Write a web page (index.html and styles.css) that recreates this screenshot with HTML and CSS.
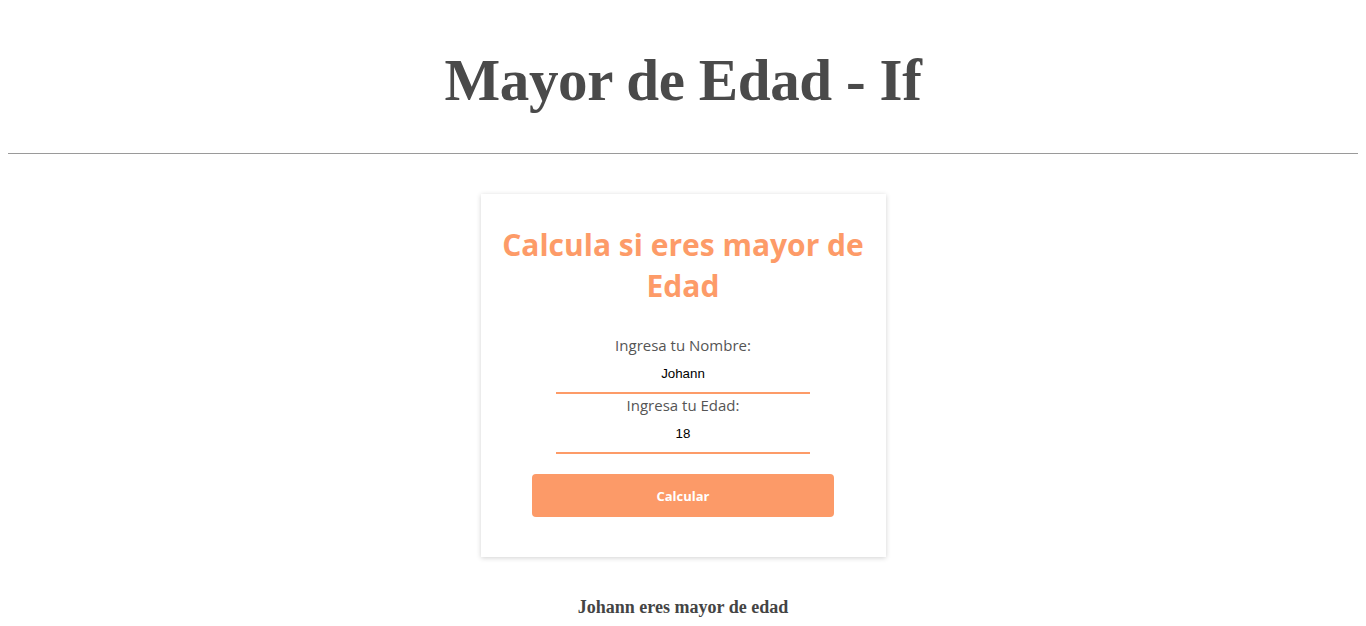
FILE: index.html
```html
<!DOCTYPE html>
<html lang="es">
<head>
<meta charset="utf-8">
<title>Mayor de Edad - If</title>
<link rel="stylesheet" href="styles.css">
</head>
<body>
<h1 class="title">Mayor de Edad - If</h1>
<hr class="divider">
<main class="wrap">
  <section class="card">
    <h2 class="card-title">Calcula si eres mayor de Edad</h2>
    <form class="form">
      <label class="label" for="nombre">Ingresa tu Nombre:</label>
      <input class="field" id="nombre" type="text" value="Johann">
      <label class="label" for="edad">Ingresa tu Edad:</label>
      <input class="field" id="edad" type="text" value="18">
      <button class="btn" type="button">Calcular</button>
    </form>
  </section>
  <p class="result">Johann eres mayor de edad</p>
</main>
</body>
</html>
```
FILE: styles.css
```css
html, body { background: #fff; }
body {
  margin: 8px;
  font-family: "Liberation Serif", "Times New Roman", serif;
}
.title {
  margin: 35px 0 0;
  text-align: center;
  font-size: 59px;
  line-height: 74px;
  letter-spacing: -0.4px;
  font-weight: bold;
  color: #4a4a4a;
}
.divider {
  margin: 36px 0 0;
  border: none;
  border-top: 1px solid #9a9a9a;
  height: 0;
}
.wrap {
  display: flex;
  flex-direction: column;
  align-items: center;
  padding-top: 40px;
}
.card {
  width: 405px;
  box-sizing: border-box;
  padding: 30px 15px 40px;
  background: #fff;
  box-shadow: 0 1px 5px rgba(0,0,0,0.18);
  text-align: center;
}
.card-title {
  margin: 0;
  font-family: "Open Sans", "Noto Sans", sans-serif;
  font-size: 30px;
  line-height: 41px;
  font-weight: bold;
  color: #fd9b68;
}
.form {
  display: flex;
  flex-direction: column;
  align-items: center;
  margin-top: 28px;
}
.label {
  font-family: "Open Sans", "Noto Sans", sans-serif;
  font-size: 15px;
  line-height: 22px;
  color: #555;
}
.field {
  width: 254px;
  box-sizing: border-box;
  height: 35px;
  margin-top: 3px;
  border: none;
  border-bottom: 2px solid #fd9b68;
  outline: none;
  text-align: center;
  font-family: "Liberation Sans", Arial, sans-serif;
  font-size: 13.33px;
  color: #000;
  background: transparent;
  padding: 0 0 4px;
}
.btn {
  margin-top: 20px;
  width: 302px;
  height: 43px;
  border: none;
  border-radius: 4px;
  background: #fc9a68;
  color: #fff;
  font-family: "Open Sans", "Noto Sans", sans-serif;
  font-weight: bold;
  font-size: 13px;
}
.result {
  margin: 40px 0 0;
  font-weight: bold;
  font-size: 18px;
  color: #444;
}
```
